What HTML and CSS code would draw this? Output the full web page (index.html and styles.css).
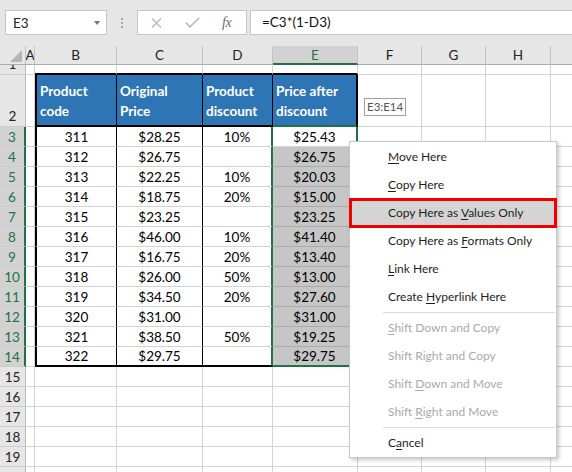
FILE: index.html
```html
<!DOCTYPE html>
<html>
<head>
<meta charset="utf-8">
<title>Excel drag menu</title>
<link rel="stylesheet" href="styles.css">
</head>
<body>
<div class="app">
  <div class="fbar">
    <div class="namebox"><span>E3</span><span class="nb-arrow"></span></div>
    <div class="grip"><i></i><i></i><i></i></div>
    <div class="fbtns">
      <svg class="ic-x" width="11" height="10" viewBox="0 0 11 10"><path d="M1 0.5 L10 9.5 M10 0.5 L1 9.5" stroke="#b9b9b9" stroke-width="1.4" fill="none"/></svg>
      <svg class="ic-ok" width="15" height="11" viewBox="0 0 15 11"><path d="M0.8 5.6 L5 9.8 L14.2 0.7" stroke="#b9b9b9" stroke-width="1.6" fill="none"/></svg>
      <span class="fx">fx</span>
    </div>
    <div class="finput">=C3*(1-D3)</div>
  </div>

  <div class="sheet">
    <div class="row hdr">
      <div class="c corner"><svg width="26" height="19" viewBox="0 0 26 19"><polygon points="22,4 22,16 10,16" fill="#b5b5b5"/></svg></div>
      <div class="c">A</div><div class="c">B</div><div class="c">C</div><div class="c">D</div>
      <div class="c sel">E</div><div class="c">F</div><div class="c">G</div><div class="c">H</div><div class="c">I</div>
    </div>
    <div class="row r1">
      <div class="c rh low">1</div><div class="c"></div>
      <div class="c tt"></div><div class="c tt"></div><div class="c tt"></div><div class="c tt"></div>
      <div class="c"></div><div class="c"></div><div class="c"></div><div class="c"></div>
    </div>
    <div class="row r2">
      <div class="c rh low">2</div><div class="c"></div>
      <div class="c th first">Product code</div>
      <div class="c th">Original Price</div>
      <div class="c th">Product discount</div>
      <div class="c th last">Price after discount</div>
      <div class="c"></div><div class="c"></div><div class="c"></div><div class="c"></div>
    </div>

    <div class="row"><div class="c rh sel">3</div><div class="c"></div><div class="c tb first">311</div><div class="c tb">$28.25</div><div class="c td">10%</div><div class="c te">$25.43</div><div class="c"></div><div class="c"></div><div class="c"></div><div class="c"></div></div>
    <div class="row"><div class="c rh sel">4</div><div class="c"></div><div class="c tb first">312</div><div class="c tb">$26.75</div><div class="c td"></div><div class="c te g">$26.75</div><div class="c"></div><div class="c"></div><div class="c"></div><div class="c"></div></div>
    <div class="row"><div class="c rh sel">5</div><div class="c"></div><div class="c tb first">313</div><div class="c tb">$22.25</div><div class="c td">10%</div><div class="c te g">$20.03</div><div class="c"></div><div class="c"></div><div class="c"></div><div class="c"></div></div>
    <div class="row"><div class="c rh sel">6</div><div class="c"></div><div class="c tb first">314</div><div class="c tb">$18.75</div><div class="c td">20%</div><div class="c te g">$15.00</div><div class="c"></div><div class="c"></div><div class="c"></div><div class="c"></div></div>
    <div class="row"><div class="c rh sel">7</div><div class="c"></div><div class="c tb first">315</div><div class="c tb">$23.25</div><div class="c td"></div><div class="c te g">$23.25</div><div class="c"></div><div class="c"></div><div class="c"></div><div class="c"></div></div>
    <div class="row"><div class="c rh sel">8</div><div class="c"></div><div class="c tb first">316</div><div class="c tb">$46.00</div><div class="c td">10%</div><div class="c te g">$41.40</div><div class="c"></div><div class="c"></div><div class="c"></div><div class="c"></div></div>
    <div class="row"><div class="c rh sel">9</div><div class="c"></div><div class="c tb first">317</div><div class="c tb">$16.75</div><div class="c td">20%</div><div class="c te g">$13.40</div><div class="c"></div><div class="c"></div><div class="c"></div><div class="c"></div></div>
    <div class="row"><div class="c rh sel">10</div><div class="c"></div><div class="c tb first">318</div><div class="c tb">$26.00</div><div class="c td">50%</div><div class="c te g">$13.00</div><div class="c"></div><div class="c"></div><div class="c"></div><div class="c"></div></div>
    <div class="row"><div class="c rh sel">11</div><div class="c"></div><div class="c tb first">319</div><div class="c tb">$34.50</div><div class="c td">20%</div><div class="c te g">$27.60</div><div class="c"></div><div class="c"></div><div class="c"></div><div class="c"></div></div>
    <div class="row"><div class="c rh sel">12</div><div class="c"></div><div class="c tb first">320</div><div class="c tb">$31.00</div><div class="c td"></div><div class="c te g">$31.00</div><div class="c"></div><div class="c"></div><div class="c"></div><div class="c"></div></div>
    <div class="row"><div class="c rh sel">13</div><div class="c"></div><div class="c tb first">321</div><div class="c tb">$38.50</div><div class="c td">50%</div><div class="c te g">$19.25</div><div class="c"></div><div class="c"></div><div class="c"></div><div class="c"></div></div>
    <div class="row last"><div class="c rh sel">14</div><div class="c"></div><div class="c tb first">322</div><div class="c tb">$29.75</div><div class="c td"></div><div class="c te g">$29.75</div><div class="c"></div><div class="c"></div><div class="c"></div><div class="c"></div></div>

    <div class="row"><div class="c rh">15</div><div class="c"></div><div class="c"></div><div class="c"></div><div class="c"></div><div class="c"></div><div class="c"></div><div class="c"></div><div class="c"></div><div class="c"></div></div>
    <div class="row"><div class="c rh">16</div><div class="c"></div><div class="c"></div><div class="c"></div><div class="c"></div><div class="c"></div><div class="c"></div><div class="c"></div><div class="c"></div><div class="c"></div></div>
    <div class="row"><div class="c rh">17</div><div class="c"></div><div class="c"></div><div class="c"></div><div class="c"></div><div class="c"></div><div class="c"></div><div class="c"></div><div class="c"></div><div class="c"></div></div>
    <div class="row"><div class="c rh">18</div><div class="c"></div><div class="c"></div><div class="c"></div><div class="c"></div><div class="c"></div><div class="c"></div><div class="c"></div><div class="c"></div><div class="c"></div></div>
    <div class="row"><div class="c rh">19</div><div class="c"></div><div class="c"></div><div class="c"></div><div class="c"></div><div class="c"></div><div class="c"></div><div class="c"></div><div class="c"></div><div class="c"></div></div>
    <div class="row"><div class="c rh">20</div><div class="c"></div><div class="c"></div><div class="c"></div><div class="c"></div><div class="c"></div><div class="c"></div><div class="c"></div><div class="c"></div><div class="c"></div></div>
  </div>

  <div class="tip">E3:E14</div>

  <div class="menu">
    <div class="mi"><u>M</u>ove Here</div>
    <div class="mi"><u>C</u>opy Here</div>
    <div class="mi hl">Copy Here as <u>V</u>alues Only</div>
    <div class="mi">Copy Here as <u>F</u>ormats Only</div>
    <div class="mi"><u>L</u>ink Here</div>
    <div class="mi">Create <u>H</u>yperlink Here</div>
    <div class="sep"></div>
    <div class="mi dis"><u>S</u>hift Down and Copy</div>
    <div class="mi dis">Shif<u>t</u> Right and Copy</div>
    <div class="mi dis">Shift <u>D</u>own and Move</div>
    <div class="mi dis">Shift <u>R</u>ight and Move</div>
    <div class="sep"></div>
    <div class="mi">C<u>a</u>ncel</div>
  </div>
</div>
</body>
</html>
```

FILE: styles.css
```css
html, body {
  margin: 0;
  padding: 0;
  background: #fff;
}
body {
  width: 572px;
  height: 472px;
  overflow: hidden;
  font-family: Lato, "Liberation Sans", sans-serif;
}
.app {
  position: relative;
  width: 572px;
  height: 472px;
  overflow: hidden;
}

/* formula bar */
.fbar {
  height: 46px;
  box-sizing: border-box;
  background: #e6e6e6;
  display: flex;
  align-items: flex-start;
  padding: 10px 0 0 5px;
}
.namebox {
  width: 102px;
  height: 25px;
  box-sizing: border-box;
  background: #fff;
  border: 1px solid #c6c6c6;
  display: flex;
  align-items: center;
  justify-content: space-between;
  padding: 0 6px 0 7px;
  font-size: 13.5px;
  color: #222;
}
.nb-arrow {
  width: 0;
  height: 0;
  border-left: 3.5px solid transparent;
  border-right: 3.5px solid transparent;
  border-top: 4px solid #777;
}
.grip {
  width: 30px;
  height: 25px;
  display: flex;
  flex-direction: column;
  align-items: center;
  justify-content: center;
  gap: 2px;
}
.grip i {
  display: block;
  width: 2px;
  height: 2px;
  background: #a4a4a4;
}
.fbtns {
  width: 110px;
  height: 25px;
  box-sizing: border-box;
  background: #fff;
  border: 1px solid #c6c6c6;
  display: flex;
  align-items: center;
}
.ic-x { margin-left: 13px; }
.ic-ok { margin-left: 23px; }
.fx {
  margin-left: 22px;
  font-family: "Liberation Serif", serif;
  font-style: italic;
  font-size: 14px;
  color: #6a6a6a;
  letter-spacing: -0.5px;
}
.finput {
  flex: 1;
  margin-left: 3px;
  height: 25px;
  box-sizing: border-box;
  background: #fff;
  border: 1px solid #c6c6c6;
  border-right: none;
  padding-left: 11px;
  font-size: 13.5px;
  line-height: 23px;
  color: #111;
}

/* sheet */
.row {
  display: grid;
  grid-template-columns: 26px 9px 82px 86px 70px 85px 64px 64px 65px 65px;
  height: 20px;
}
.c {
  box-sizing: border-box;
  border-right: 1px solid #d4d4d4;
  border-bottom: 1px solid #d4d4d4;
  display: flex;
  align-items: center;
  justify-content: center;
  overflow: hidden;
  white-space: nowrap;
  font-size: 13.5px;
  line-height: 20px;
  color: #000;
}
.hdr { height: 19px; }
.hdr .c {
  background: #e6e6e6;
  border-right-color: #c4c4c4;
  border-bottom-color: #ababab;
  color: #222;
}
.hdr .c.sel {
  background: #d2d2d2;
  color: #217346;
  border-bottom: 2px solid #217346;
}
.hdr .corner { display: block; }
.hdr .corner svg { display: block; }

.rh {
  background: #e6e6e6;
  border-right-color: #bcbcbc;
  border-bottom-color: #cdcdcd;
  color: #222;
}
.rh.sel {
  background: #d2d2d2;
  color: #217346;
  border-right: 2px solid #217346;
}
.rh.low { align-items: flex-end; }

.r1 { height: 10px; }
.r2 { height: 52px; }

.tt { border-bottom: 2px solid #000; }

.th {
  background: #2e75b6;
  color: #fff;
  font-weight: 700;
  white-space: normal;
  align-items: flex-end;
  justify-content: flex-start;
  line-height: 20px;
  padding: 0 4px 4px 3px;
  border-right-color: #000;
  border-bottom: 2px solid #000;
}
.first { border-left: 2px solid #000; }
.th.last {
  border-right: 2px solid #000;
  border-bottom-color: #217346;
}

.tb { border-right-color: #000; }
.td { border-right: 2px solid #217346; }
.te { border-right: 2px solid #217346; }
.te.g {
  background: #c6c6c6;
  border-bottom-color: #ababab;
}
.row.last .tb,
.row.last .td { border-bottom: 2px solid #000; }
.row.last .te { border-bottom: 2px solid #217346; }

/* screen tip */
.tip {
  position: absolute;
  left: 364px;
  top: 98px;
  height: 18px;
  box-sizing: border-box;
  padding: 0 2px 0 2px;
  border: 1px solid #a0a0a0;
  background: #fff;
  font-size: 11.5px;
  line-height: 16px;
  color: #555;
}

/* context menu */
.menu {
  position: absolute;
  left: 349px;
  top: 141px;
  width: 208px;
  box-sizing: border-box;
  background: #fff;
  border: 1px solid #c8c8c8;
  padding: 1px 0 0 0;
  box-shadow: 2px 2px 4px rgba(0, 0, 0, 0.22);
}
.mi {
  height: 28px;
  line-height: 28px;
  padding-left: 38px;
  font-size: 12px;
  color: #1e1e1e;
  white-space: nowrap;
}
.mi u { text-underline-offset: 2px; }
.mi.hl {
  background: #d4d4d4;
  outline: 3px solid #f00000;
  outline-offset: -2px;
}
.mi.dis { color: #aaaaaa; }
.sep {
  height: 1px;
  background: #d9d9d9;
  margin: 1px 1px 1px 33px;
}
```
